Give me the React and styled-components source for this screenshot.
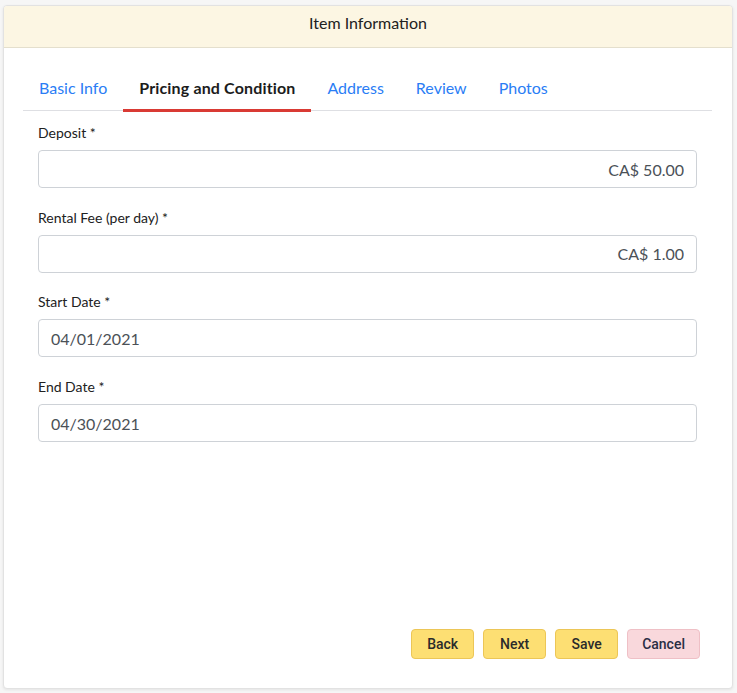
import React, { useState } from "react";
import styled, { createGlobalStyle } from "styled-components";

const GlobalStyle = createGlobalStyle`
  html, body {
    margin: 0;
    padding: 0;
    background: #f6f6f6;
  }
  * {
    box-sizing: border-box;
  }
`;

const Page = styled.div`
  width: 737px;
  height: 693px;
  padding: 5px 4px 4px 3px;
  font-family: Lato, "Open Sans", sans-serif;
`;

const Card = styled.div`
  height: 100%;
  display: flex;
  flex-direction: column;
  background: #fff;
  border: 1px solid #e2e2e2;
  border-radius: 4px;
  box-shadow: 0 1px 3px rgba(0, 0, 0, 0.08);
  overflow: hidden;
`;

const Header = styled.div`
  height: 42px;
  display: flex;
  align-items: center;
  justify-content: center;
  padding-bottom: 8px;
  background: #fcf6e3;
  border-bottom: 1px solid #e4dfcd;
  font-size: 16px;
  color: #212121;
`;

const TabList = styled.div`
  display: flex;
  margin: 15px 20px 0 19px;
  border-bottom: 1px solid #dedfe3;
`;

const Tab = styled.button`
  position: relative;
  background: none;
  border: none;
  padding: 13px 16px 10px;
  font-family: Lato, "Open Sans", sans-serif;
  font-size: 16px;
  line-height: 24px;
  letter-spacing: ${(p) => (p.active ? "0.15px" : "0")};
  cursor: pointer;
  color: ${(p) => (p.active ? "#1c1c1c" : "#2a7df5")};
  font-weight: ${(p) => (p.active ? 700 : 400)};

  &::after {
    content: "";
    position: absolute;
    left: 0;
    right: 0;
    bottom: -2px;
    height: 3px;
    background: ${(p) => (p.active ? "#d93a34" : "transparent")};
  }
`;

const Form = styled.div`
  padding: 12px 35px 0 34px;
`;

const Field = styled.div`
  margin-bottom: 19.7px;
`;

const Label = styled.div`
  font-size: 14px;
  line-height: 20px;
  color: #212121;
  margin-bottom: 7px;
`;

const Input = styled.input`
  display: block;
  width: 100%;
  height: 38px;
  padding: 0 12px;
  border: 1px solid #ced2d7;
  border-radius: 4px;
  font-family: Lato, "Open Sans", sans-serif;
  font-size: 16px;
  color: #4b5157;
  text-align: ${(p) => (p.right ? "right" : "left")};
  outline: none;
`;

const Footer = styled.div`
  margin-top: auto;
  display: flex;
  justify-content: flex-end;
  gap: 9px;
  padding: 0 32px 29px 0;
`;

const Button = styled.button`
  height: 30px;
  padding: 0 14px;
  min-width: 63px;
  border-radius: 4px;
  font-family: Roboto, sans-serif;
  font-weight: 500;
  font-size: 14px;
  cursor: pointer;
  color: ${(p) => (p.danger ? "#2a2f45" : "#2b2b2b")};
  background: ${(p) => (p.danger ? "#f9d8dc" : "#fddf73")};
  border: 1px solid ${(p) => (p.danger ? "#efc0c6" : "#ecc657")};
`;

const tabs = ["Basic Info", "Pricing and Condition", "Address", "Review", "Photos"];

const fields = [
  { label: "Deposit *", value: "CA$ 50.00", right: true },
  { label: "Rental Fee (per day) *", value: "CA$ 1.00", right: true },
  { label: "Start Date *", value: "04/01/2021" },
  { label: "End Date *", value: "04/30/2021" },
];

export default function App() {
  const [active, setActive] = useState(1);

  return (
    <Page>
      <GlobalStyle />
      <Card>
        <Header>Item Information</Header>
        <TabList>
          {tabs.map((t, i) => (
            <Tab key={t} active={i === active} onClick={() => setActive(i)}>
              {t}
            </Tab>
          ))}
        </TabList>
        <Form>
          {fields.map((f) => (
            <Field key={f.label}>
              <Label>{f.label}</Label>
              <Input right={f.right} defaultValue={f.value} />
            </Field>
          ))}
        </Form>
        <Footer>
          <Button>Back</Button>
          <Button>Next</Button>
          <Button>Save</Button>
          <Button danger>Cancel</Button>
        </Footer>
      </Card>
    </Page>
  );
}
